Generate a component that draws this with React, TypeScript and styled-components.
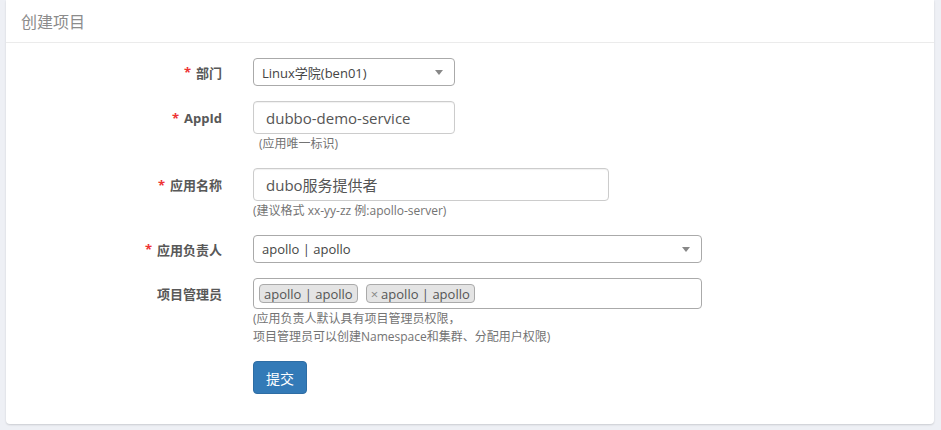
import styled, { createGlobalStyle } from "styled-components";

const GlobalStyle = createGlobalStyle`
  body {
    margin: 0;
    background: #eef0f5;
    font-family: "Open Sans", "Noto Sans CJK SC", sans-serif;
  }
`;

const Page = styled.div`
  padding: 0 7px 6px 6px;
`;

const Panel = styled.div`
  background: #fff;
  border-radius: 0 0 4px 4px;
  box-shadow: 0 1px 2px rgba(0, 0, 0, 0.15);
`;

const PanelHeading = styled.div`
  height: 42px;
  display: flex;
  align-items: center;
  padding-left: 15px;
  border-bottom: 1px solid #ebebeb;
  font-size: 16px;
  color: #8c8c8c;
`;

const Form = styled.form`
  padding: 15px 0 30px;
  display: flex;
  flex-direction: column;
  gap: 15px;
`;

const Row = styled.div`
  display: grid;
  grid-template-columns: 216px 1fr;
  column-gap: 31px;
  align-items: start;
`;

const Label = styled.label<{ $h: number }>`
  height: ${(p) => p.$h}px;
  display: flex;
  align-items: center;
  justify-content: flex-end;
  font-size: 13px;
  font-weight: bold;
  color: #585858;
`;

const Star = styled.span`
  color: #e33;
  margin-right: 5px;
`;

const Control = styled.div<{ $w: number }>`
  width: ${(p) => p.$w}px;
`;

const Select = styled.div<{ $h: number }>`
  height: ${(p) => p.$h}px;
  box-sizing: border-box;
  border: 1px solid #aaa;
  border-radius: 4px;
  display: flex;
  align-items: center;
  padding: 0 8px;
  font-size: 13px;
  color: #444;
`;

const SelectText = styled.span`
  flex: 1;
`;

const Arrow = styled.span`
  width: 0;
  height: 0;
  border-left: 4px solid transparent;
  border-right: 4px solid transparent;
  border-top: 5px solid #888;
  margin-right: 3px;
`;

const Input = styled.div`
  height: 33px;
  box-sizing: border-box;
  border: 1px solid #ccc;
  border-radius: 4px;
  box-shadow: inset 0 1px 1px rgba(0, 0, 0, 0.06);
  display: flex;
  align-items: center;
  padding: 0 12px;
  font-size: 15px;
  color: #555;
`;

const Help = styled.div<{ $indent?: number }>`
  margin-top: 1px;
  padding-left: ${(p) => p.$indent ?? 0}px;
  font-size: 12px;
  line-height: 18px;
  color: #737373;
`;

const Multi = styled.div`
  height: 31px;
  box-sizing: border-box;
  border: 1px solid #aaa;
  border-radius: 4px;
  display: flex;
  align-items: center;
  gap: 8px;
  padding: 0 5px;
`;

const Tag = styled.span`
  height: 19px;
  box-sizing: border-box;
  display: inline-flex;
  align-items: center;
  padding: 0 4px;
  background: #e4e4e4;
  border: 1px solid #aaa;
  border-radius: 4px;
  font-size: 13px;
  color: #555;
`;

const Remove = styled.span`
  color: #888;
  margin-right: 3px;
`;

const Button = styled.button`
  height: 33px;
  padding: 0 12px;
  background: #337ab7;
  border: 1px solid #2e6da4;
  border-radius: 4px;
  color: #fff;
  font-family: inherit;
  font-size: 14px;
`;

export default function App() {
  return (
    <Page>
      <GlobalStyle />
      <Panel>
        <PanelHeading>创建项目</PanelHeading>
        <Form>
          <Row>
            <Label $h={28}>
              <Star>*</Star>部门
            </Label>
            <Control $w={202}>
              <Select $h={28}>
                <SelectText>Linux学院(ben01)</SelectText>
                <Arrow />
              </Select>
            </Control>
          </Row>
          <Row>
            <Label $h={33}>
              <Star>*</Star>AppId
            </Label>
            <Control $w={202}>
              <Input>dubbo-demo-service</Input>
              <Help $indent={6}>(应用唯一标识)</Help>
            </Control>
          </Row>
          <Row>
            <Label $h={33}>
              <Star>*</Star>应用名称
            </Label>
            <Control $w={356}>
              <Input>dubo服务提供者</Input>
              <Help>(建议格式 xx-yy-zz 例:apollo-server)</Help>
            </Control>
          </Row>
          <Row>
            <Label $h={28}>
              <Star>*</Star>应用负责人
            </Label>
            <Control $w={449}>
              <Select $h={28}>
                <SelectText>apollo | apollo</SelectText>
                <Arrow />
              </Select>
            </Control>
          </Row>
          <Row>
            <Label $h={31}>项目管理员</Label>
            <Control $w={449}>
              <Multi>
                <Tag>apollo | apollo</Tag>
                <Tag>
                  <Remove>×</Remove>apollo | apollo
                </Tag>
              </Multi>
              <Help>
                (应用负责人默认具有项目管理员权限，
                <br />
                项目管理员可以创建Namespace和集群、分配用户权限)
              </Help>
            </Control>
          </Row>
          <Row>
            <span />
            <Control $w={202}>
              <Button type="button">提交</Button>
            </Control>
          </Row>
        </Form>
      </Panel>
    </Page>
  );
}
